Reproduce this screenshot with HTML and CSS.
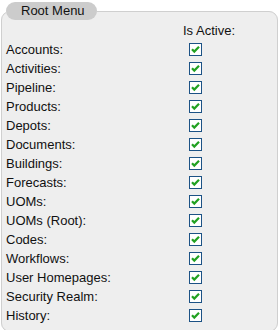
FILE: index.html
```html
<!DOCTYPE html>
<html>
<head>
<meta charset="utf-8">
<link rel="stylesheet" href="styles.css">
</head>
<body>
<fieldset class="panel">
  <legend class="pill">Root Menu</legend>
  <div class="grid">
    <div class="head-spacer"></div>
    <div class="head">Is Active:</div>

    <div class="label">Accounts:</div><div class="cell"><span class="cb"></span></div>
    <div class="label">Activities:</div><div class="cell"><span class="cb"></span></div>
    <div class="label">Pipeline:</div><div class="cell"><span class="cb"></span></div>
    <div class="label">Products:</div><div class="cell"><span class="cb"></span></div>
    <div class="label">Depots:</div><div class="cell"><span class="cb"></span></div>
    <div class="label">Documents:</div><div class="cell"><span class="cb"></span></div>
    <div class="label">Buildings:</div><div class="cell"><span class="cb"></span></div>
    <div class="label">Forecasts:</div><div class="cell"><span class="cb"></span></div>
    <div class="label">UOMs:</div><div class="cell"><span class="cb"></span></div>
    <div class="label">UOMs (Root):</div><div class="cell"><span class="cb"></span></div>
    <div class="label">Codes:</div><div class="cell"><span class="cb"></span></div>
    <div class="label">Workflows:</div><div class="cell"><span class="cb"></span></div>
    <div class="label">User Homepages:</div><div class="cell"><span class="cb"></span></div>
    <div class="label">Security Realm:</div><div class="cell"><span class="cb"></span></div>
    <div class="label">History:</div><div class="cell"><span class="cb"></span></div>
  </div>
</fieldset>
</body>
</html>
```

FILE: styles.css
```css
html, body {
  margin: 0;
  padding: 0;
  background: #ffffff;
}
body {
  font-family: "Liberation Sans", Arial, sans-serif;
  font-size: 13px;
  color: #111111;
  padding: 2px 2px 0 1px;
}
.panel {
  margin: 0;
  border: 1px solid #cfcfcf;
  border-radius: 9px;
  background: #eeeeee;
  padding: 1px 4px 6px 4px;
  min-width: 0;
}
.pill {
  background: #cccccc;
  border-radius: 9px;
  padding: 0 12px 0 15px;
  line-height: 18px;
  margin-left: 0;
  color: #111111;
}
.grid {
  display: grid;
  grid-template-columns: 177px 1fr;
  grid-auto-rows: 19px;
  align-items: center;
}
.head {
  line-height: 19px;
}
.label {
  line-height: 19px;
}
.cell {
  padding-left: 6px;
  display: flex;
  align-items: center;
}
.cb {
  display: inline-block;
  width: 13px;
  height: 13px;
  box-sizing: border-box;
  border: 1px solid #1c5285;
  background: #ffffff url("data:image/svg+xml;utf8,<svg xmlns='http://www.w3.org/2000/svg' width='11' height='11' viewBox='0 0 11 11'><path d='M2 5.2 L4.3 7.6 L9 2.8' fill='none' stroke='%2321a121' stroke-width='2.2'/></svg>") no-repeat center;
}
```
